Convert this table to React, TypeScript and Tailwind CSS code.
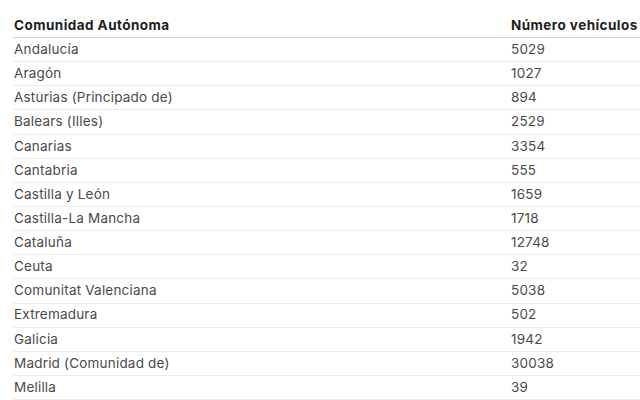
const rows: [string, number][] = [
  ["Andalucía", 5029],
  ["Aragón", 1027],
  ["Asturias (Principado de)", 894],
  ["Balears (Illes)", 2529],
  ["Canarias", 3354],
  ["Cantabria", 555],
  ["Castilla y León", 1659],
  ["Castilla-La Mancha", 1718],
  ["Cataluña", 12748],
  ["Ceuta", 32],
  ["Comunitat Valenciana", 5038],
  ["Extremadura", 502],
  ["Galicia", 1942],
  ["Madrid (Comunidad de)", 30038],
  ["Melilla", 39],
];

export default function App() {
  return (
    <div className="h-[400px] w-[640px] overflow-hidden bg-white pl-[13px] pt-[15px] font-['Inter',sans-serif] text-[13.5px] tracking-[0.2px]">
      <div className="w-[700px]">
        <div className="flex h-[23px] items-center border-b border-[#cfcfcf] pb-px font-bold tracking-[0.45px] text-[#1d1d1d]">
          <div className="w-[498px] pl-px">Comunidad Autónoma</div>
          <div>Número vehículos</div>
        </div>
        {rows.map(([name, count]) => (
          <div
            key={name}
            className="flex h-[24.15px] items-center border-b border-[#ececec] pb-px text-[#4a4a4a]"
          >
            <div className="w-[498px] pl-px">{name}</div>
            <div>{count}</div>
          </div>
        ))}
      </div>
    </div>
  );
}
